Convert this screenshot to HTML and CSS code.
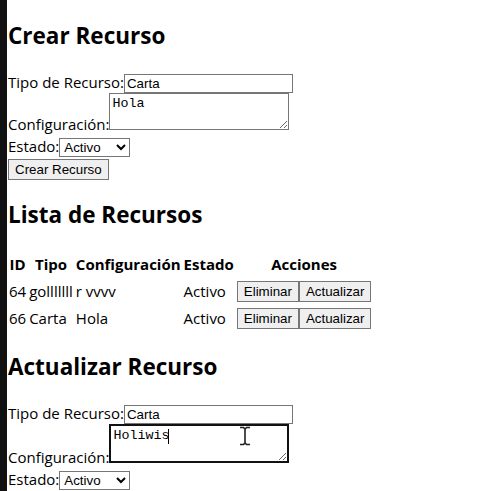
FILE: index.html
```html
<!DOCTYPE html>
<html lang="es">
<head>
  <meta charset="UTF-8">
  <title>Recursos</title>
  <link rel="stylesheet" href="styles.css">
</head>
<body>

  <h2>Crear Recurso</h2>
  <form id="crearForm">
    <label>Tipo de Recurso:</label><input type="text" name="tipo" value="Carta"><br>
    <label>Configuración:</label><textarea name="configuracion">Hola</textarea><br>
    <label>Estado:</label><select name="estado">
      <option>Activo</option>
      <option>Inactivo</option>
    </select><br>
    <button type="submit" class="submit">Crear Recurso</button>
  </form>

  <h2>Lista de Recursos</h2>
  <table class="recursos">
    <thead>
      <tr>
        <th>ID</th>
        <th>Tipo</th>
        <th>Configuración</th>
        <th>Estado</th>
        <th>Acciones</th>
      </tr>
    </thead>
    <tbody>
      <tr>
        <td>64</td>
        <td>golllllll</td>
        <td>r vvvv</td>
        <td>Activo</td>
        <td><button>Eliminar</button><button>Actualizar</button></td>
      </tr>
      <tr>
        <td>66</td>
        <td>Carta</td>
        <td>Hola</td>
        <td>Activo</td>
        <td><button>Eliminar</button><button>Actualizar</button></td>
      </tr>
    </tbody>
  </table>

  <h2>Actualizar Recurso</h2>
  <form id="actualizarForm">
    <label>Tipo de Recurso:</label><input type="text" name="tipo" value="Carta"><br>
    <label>Configuración:</label><span class="area-wrap"><textarea name="configuracion" class="focused">Holiwis</textarea><span class="caret"></span><svg class="ibeam" width="12" height="20" viewBox="0 0 12 20"><path d="M1 1.5h3.5l1.5 1.5l1.5-1.5h3.5M6 3v14M1 18.5h3.5l1.5-1.5l1.5 1.5h3.5" fill="none" stroke="#222" stroke-width="1.6"/></svg></span><br>
    <label>Estado:</label><select name="estado">
      <option>Activo</option>
      <option>Inactivo</option>
    </select>
  </form>

</body>
</html>
```

FILE: styles.css
```css
body {
  margin: 0;
  padding: 1px 0 0 1px;
  border-left: 7px solid #111;
  min-height: 100vh;
  box-sizing: border-box;
  font-family: "Open Sans", Arial, sans-serif;
  font-size: 15px;
  line-height: 22px;
  color: #000;
  background: #fff;
}

h2 {
  font-size: 22.5px;
  line-height: 30px;
  margin: 20px 0;
}

input,
select,
button {
  font-family: "Liberation Sans", Arial, sans-serif;
  font-size: 13.33px;
}

input[type="text"] {
  width: 163px;
  padding: 1px 2px;
  border: 1px solid #767676;
}

textarea {
  font-family: "Liberation Mono", monospace;
  font-size: 13.33px;
  line-height: 15px;
  width: 174px;
  height: 31px;
  padding: 2px;
  border: 1px solid #767676;
}

.area-wrap {
  position: relative;
  display: inline-block;
  line-height: 0;
}

textarea.focused {
  border: 2px solid #111;
  width: 172px;
  outline: none;
}

.caret {
  position: absolute;
  left: 59px;
  top: 5px;
  width: 1px;
  height: 15px;
  background: #000;
}

.ibeam {
  position: absolute;
  left: 130px;
  top: 2px;
}

select {
  width: 71px;
  border: 1px solid #767676;
  background: #fff;
}

button {
  background: #efefef;
  border: 1px solid #767676;
  padding: 2px 6px;
}

.submit {
  margin-top: 1px;
}

.recursos {
  margin-left: -2px;
}

.recursos th,
.recursos td {
  padding: 1px 0 1px 1px;
}
```
